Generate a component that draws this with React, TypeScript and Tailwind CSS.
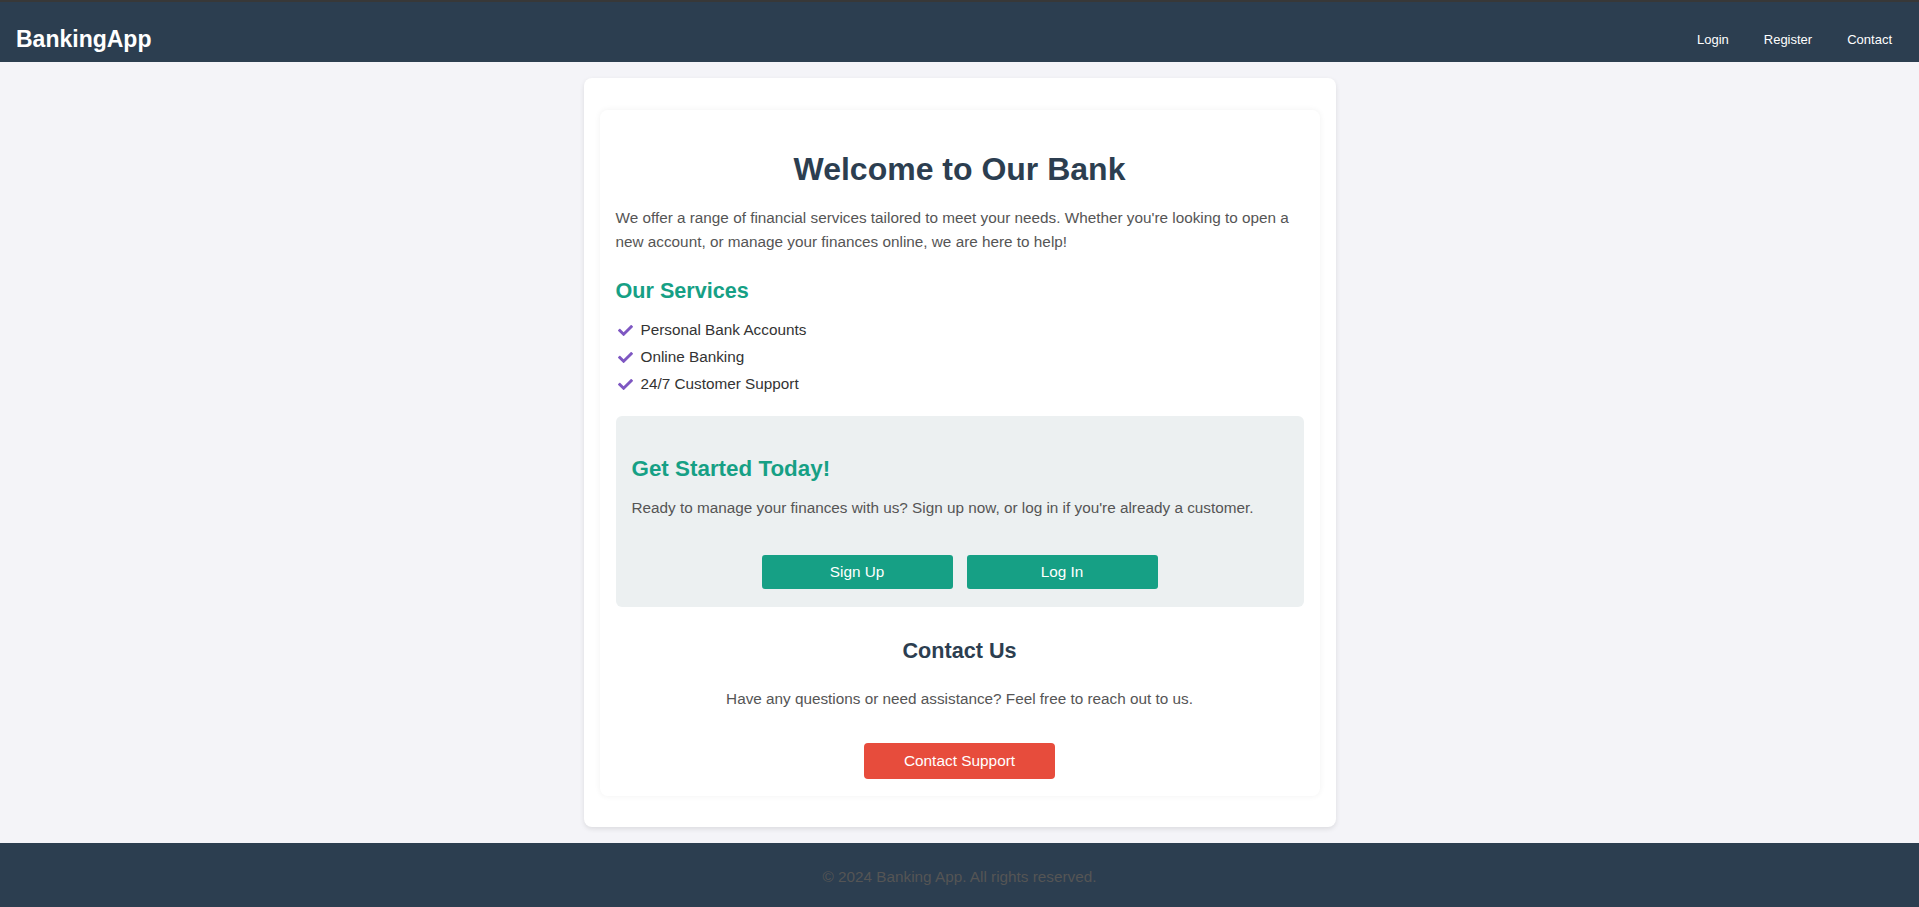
import React from "react";
import { FaCheck } from "react-icons/fa";

const font = { fontFamily: '"Liberation Sans", Arial, sans-serif' };

export default function App() {
  return (
    <div className="flex min-h-[907px] flex-col bg-[#f4f4f8]" style={font}>
      <header className="flex h-[62px] items-center justify-between border-t-2 border-[#383838] bg-[#2c3e50] pl-4 pr-[27px] pt-[14px]">
        <div className="text-[23px] font-bold leading-[28px] text-white">BankingApp</div>
        <nav className="flex gap-[35px] pt-[2px] text-[13px] leading-[16px] text-white">
          <span>Login</span>
          <span>Register</span>
          <span>Contact</span>
        </nav>
      </header>

      <main className="flex flex-1 justify-center pt-4 pb-4">
        <div className="w-[752px] rounded-lg bg-white px-4 pt-8 pb-[29px] shadow-[0_2px_5px_rgba(0,0,0,0.1)]">
          <div className="rounded-lg bg-white px-4 pt-[41px] pb-[17px] shadow-[0_0_6px_rgba(0,0,0,0.06)]">
            <h1 className="text-center text-[32px] font-bold leading-[37px] text-[#2c3e50]">
              Welcome to Our Bank
            </h1>
            <p className="mt-[18px] text-[15.3px] leading-[24px] text-[#555]">
              We offer a range of financial services tailored to meet your needs. Whether you're looking to open a
              new account, or manage your finances online, we are here to help!
            </p>

            <h2 className="mt-[24px] text-[21.6px] font-bold leading-[26px] text-[#16a085]">Our Services</h2>
            <ul className="mt-[13px] text-[15.3px] text-[#333]">
              {["Personal Bank Accounts", "Online Banking", "24/7 Customer Support"].map((s) => (
                <li key={s} className="flex h-[27px] items-center">
                  <FaCheck className="ml-[2px] mr-[8px] text-[#7e57c2]" size={15} />
                  <span>{s}</span>
                </li>
              ))}
            </ul>

            <div className="mt-[18px] rounded-md bg-[#ecf0f1] px-4 pt-[39px] pb-[18px]">
              <h2 className="text-[22.4px] font-bold leading-[27px] text-[#16a085]">Get Started Today!</h2>
              <p className="mt-[14px] text-[15.3px] leading-[24px] text-[#555]">
                Ready to manage your finances with us? Sign up now, or log in if you're already a customer.
              </p>
              <div className="mt-[35px] flex justify-center gap-[14px]">
                <button className="h-[34px] w-[191px] rounded-[3px] bg-[#16a085] text-[15.3px] text-white">
                  Sign Up
                </button>
                <button className="h-[34px] w-[191px] rounded-[3px] bg-[#16a085] text-[15.3px] text-white">
                  Log In
                </button>
              </div>
            </div>

            <h2 className="mt-[31px] text-center text-[21.6px] font-bold leading-[26px] text-[#2c3e50]">
              Contact Us
            </h2>
            <p className="mt-[23px] text-center text-[15.3px] leading-[24px] text-[#555]">
              Have any questions or need assistance? Feel free to reach out to us.
            </p>
            <div className="mt-[32px] flex justify-center">
              <button className="h-[36px] w-[191px] rounded-[4px] bg-[#e74c3c] text-[15.4px] text-white">
                Contact Support
              </button>
            </div>
          </div>
        </div>
      </main>

      <footer className="flex h-[64px] items-center justify-center bg-[#2c3e50] pt-[4px] text-[15.3px] text-[#555]">
        © 2024 Banking App. All rights reserved.
      </footer>
    </div>
  );
}
